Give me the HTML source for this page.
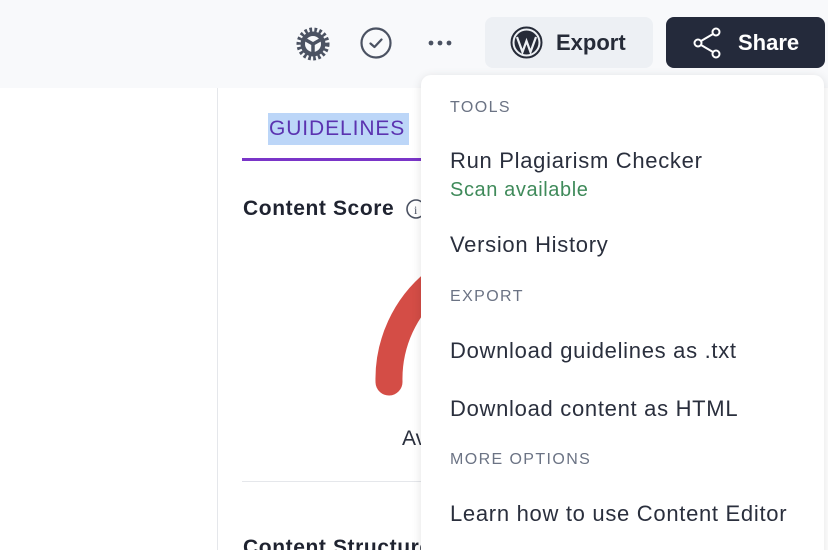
<!DOCTYPE html>
<html style="height:550px;overflow:hidden"><head><style>
body{margin:0;width:828px;height:550px;overflow:hidden;background:#fff;font-family:"Liberation Sans",sans-serif;position:relative}
.top{position:absolute;left:0;top:0;width:828px;height:88px;background:#f8f9fb}
.abs{position:absolute}
.btn{position:absolute;top:17px;height:51px;border-radius:8px;display:flex;align-items:center;font-size:22px;font-weight:bold}
.menu{position:absolute;left:421px;top:75px;width:403px;height:500px;background:#fff;border-radius:10px;box-shadow:0 2px 10px rgba(0,0,0,.12)}
.h{position:absolute;left:29px;font-size:16px;color:#6b7384;letter-spacing:1.4px}
.i{position:absolute;left:29px;font-size:22px;color:#2a2f3d;letter-spacing:0.7px}
</style></head><body>
<div class="top"></div>
<svg class="abs" style="left:295px;top:26px" width="36" height="36" viewBox="0 0 36 36"><circle cx="18" cy="18" r="14" fill="none" stroke="#4b5262" stroke-width="5" stroke-dasharray="2.6 2.2"/><circle cx="18" cy="18" r="12.5" fill="#4b5262"/><circle cx="18" cy="18" r="8" fill="#f8f9fb"/><path d="M18 18 L11 14 M18 18 L25 14 M18 18 L18 26" stroke="#4b5262" stroke-width="3.5"/></svg>
<svg class="abs" style="left:359px;top:26px" width="34" height="34" viewBox="0 0 34 34"><circle cx="17" cy="17" r="14.5" fill="none" stroke="#4b5262" stroke-width="2.2"/><path d="M11.5 17.5 L15.5 21 L22.5 13.5" fill="none" stroke="#4b5262" stroke-width="2.2" stroke-linecap="round" stroke-linejoin="round"/></svg>
<svg class="abs" style="left:426px;top:38px" width="30" height="10"><circle cx="5" cy="5" r="2.4" fill="#4b5262"/><circle cx="14" cy="5" r="2.4" fill="#4b5262"/><circle cx="23" cy="5" r="2.4" fill="#4b5262"/></svg>
<div class="btn" style="left:485px;width:168px;background:#edf0f4;color:#262b38"><svg style="margin-left:25px;margin-right:13px" width="33" height="33" viewBox="0 0 33 33"><circle cx="16.5" cy="16.5" r="15" fill="none" stroke="#262b38" stroke-width="2"/><circle cx="16.5" cy="16.5" r="12" fill="#262b38"/><path d="M7 11 L12.5 26 L16.5 15 L20.5 26 L26 11" fill="none" stroke="#edf0f4" stroke-width="2.2"/></svg>Export</div>
<div class="btn" style="left:666px;width:159px;background:#242a3b;color:#fff"><svg style="margin-left:27px;margin-right:15px" width="30" height="32" viewBox="0 0 30 32"><circle cx="23" cy="5" r="3.5" fill="none" stroke="#fff" stroke-width="2"/><circle cx="5" cy="16" r="3.5" fill="none" stroke="#fff" stroke-width="2"/><circle cx="23" cy="27" r="3.5" fill="none" stroke="#fff" stroke-width="2"/><path d="M8 14 L20 7 M8 18 L20 25" stroke="#fff" stroke-width="2"/></svg>Share</div>
<div class="abs" style="left:217px;top:88px;width:1px;height:462px;background:#e5e7eb"></div>
<div class="abs" style="left:268px;top:113px;width:141px;height:32px;background:#bcd6f8"></div>
<div class="abs" style="left:269px;top:117px;font-size:21px;color:#5b33b0;letter-spacing:0.9px">GUIDELINES</div>
<div class="abs" style="left:242px;top:158px;width:200px;height:3px;background:#7a35c8"></div>
<div class="abs" style="left:243px;top:197px;font-size:21px;font-weight:bold;color:#1f2330;letter-spacing:0.6px">Content Score</div>
<svg class="abs" style="left:406px;top:199px" width="20" height="20"><circle cx="10" cy="10" r="9" fill="none" stroke="#4b5262" stroke-width="1.6"/><text x="8" y="15" font-size="12" fill="#4b5262" font-family="Liberation Serif">i</text></svg>
<svg class="abs" style="left:360px;top:260px" width="80" height="150"><path d="M29 122 A125 125 0 0 1 75 22" fill="none" stroke="#d44d46" stroke-width="27" stroke-linecap="round"/></svg>
<div class="abs" style="left:402px;top:427px;font-size:21px;color:#2a2f3d">Av</div>
<div class="abs" style="left:242px;top:481px;width:200px;height:1px;background:#e5e7eb"></div>
<div class="abs" style="left:243px;top:536px;font-size:21px;font-weight:bold;color:#1f2330;letter-spacing:0.6px">Content Structure</div>
<div class="menu">
<div class="h" style="top:24px">TOOLS</div>
<div class="i" style="top:73px">Run Plagiarism Checker</div>
<div class="abs" style="left:29px;top:104px;font-size:20px;color:#3f8a5a;letter-spacing:0.6px">Scan available</div>
<div class="i" style="top:157px">Version History</div>
<div class="h" style="top:213px">EXPORT</div>
<div class="i" style="top:263px">Download guidelines as .txt</div>
<div class="i" style="top:321px">Download content as HTML</div>
<div class="h" style="top:376px">MORE OPTIONS</div>
<div class="i" style="top:426px">Learn how to use Content Editor</div>
</div>
</body></html>
